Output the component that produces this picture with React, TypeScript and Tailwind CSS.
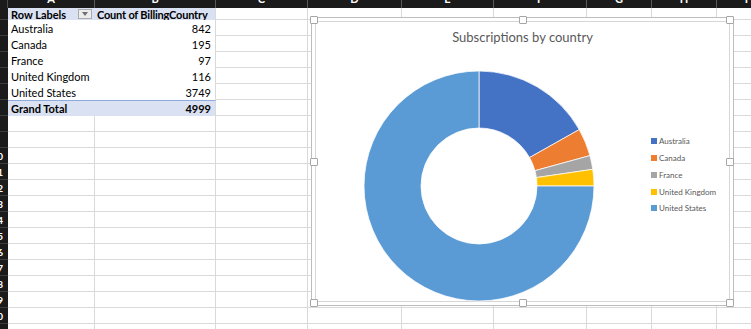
import clsx from 'clsx';

const COLS = [
  { w: 'w-[87px]', letter: 'A' },
  { w: 'w-[121px]', letter: 'B' },
  { w: 'w-[92px]', letter: 'C' },
  { w: 'w-[94px]', letter: 'D' },
  { w: 'w-[92px]', letter: 'E' },
  { w: 'w-[93px]', letter: 'F' },
  { w: 'w-[65px]', letter: 'G' },
  { w: 'w-[65px]', letter: 'H' },
  { w: 'w-[60px]', letter: 'I' },
];

const DATA = [
  { label: 'Australia', count: 842, color: '#4472C4' },
  { label: 'Canada', count: 195, color: '#ED7D31' },
  { label: 'France', count: 97, color: '#A5A5A5' },
  { label: 'United Kingdom', count: 116, color: '#FFC000' },
  { label: 'United States', count: 3749, color: '#5B9BD5' },
];

const TOTAL = DATA.reduce((sum, d) => sum + d.count, 0);

// angles measured clockwise from 12 o'clock
const point = (c: number, rad: number, deg: number) => {
  const a = (deg * Math.PI) / 180;
  return [c + rad * Math.sin(a), c - rad * Math.cos(a)];
};

const slicePath = (c: number, R: number, r: number, a0: number, a1: number) => {
  const large = a1 - a0 > 180 ? 1 : 0;
  const [x0, y0] = point(c, R, a0);
  const [x1, y1] = point(c, R, a1);
  const [x2, y2] = point(c, r, a1);
  const [x3, y3] = point(c, r, a0);
  return `M ${x0} ${y0} A ${R} ${R} 0 ${large} 1 ${x1} ${y1} L ${x2} ${y2} A ${r} ${r} 0 ${large} 0 ${x3} ${y3} Z`;
};

const Donut = () => {
  let start = 0;
  return (
    <svg width="232" height="232" viewBox="0 0 232 232" className="shrink-0">
      {DATA.map((d) => {
        const sweep = (d.count / TOTAL) * 360;
        const path = slicePath(116, 115, 58, start, start + sweep);
        start += sweep;
        return <path key={d.label} d={path} fill={d.color} stroke="#ffffff" strokeWidth="0.75" />;
      })}
    </svg>
  );
};

const Handle = ({ className }: { className: string }) => (
  <div className={clsx('absolute h-[8px] w-[8px] rounded-[1px] border border-[#a6a6a6] bg-white', className)} />
);

const Chart = () => (
  <div className="absolute left-[311px] top-[17px] h-[289px] w-[423px] border border-[#bdbdbd] bg-white p-[3px]">
    <div className="flex h-full w-full flex-col border border-[#d6d6d6]">
      <div className="mt-[7px] h-[16px] text-center text-[13px] leading-[16px] text-[#595959]">Subscriptions by country</div>
      <div className="mt-[25px] flex items-start">
        <div className="ml-[47px]">
          <Donut />
        </div>
        <div className="ml-[56px] mt-[63px] flex flex-col">
          {DATA.map((d) => (
            <div key={d.label} className="flex h-[16.75px] items-center gap-[2px] text-[8px] text-[#595959]">
              <span className="h-[6px] w-[6px]" style={{ backgroundColor: d.color }} />
              <span>{d.label}</span>
            </div>
          ))}
        </div>
      </div>
    </div>
    <Handle className="left-[-2px] top-[-2px]" />
    <Handle className="left-1/2 top-[-2px] -translate-x-1/2" />
    <Handle className="right-[-1px] top-[-2px]" />
    <Handle className="left-[-2px] top-1/2 -translate-y-1/2" />
    <Handle className="right-[-1px] top-1/2 -translate-y-1/2" />
    <Handle className="bottom-[-2px] left-[-2px]" />
    <Handle className="bottom-[-2px] left-1/2 -translate-x-1/2" />
    <Handle className="bottom-[-2px] right-[-1px]" />
  </div>
);

const RowHead = ({ n }: { n: number }) => (
  <div className="flex w-[8px] shrink-0 items-center justify-end overflow-hidden border-b border-[#3c3c3c] bg-[#1b1b1b] pr-[5px]">
    {n >= 10 && <span className="text-[10px] font-bold leading-none text-white">{n}</span>}
  </div>
);

const PivotCells = ({ n }: { n: number }) => {
  if (n === 1) {
    return (
      <>
        <div className="flex w-[87px] shrink-0 items-center bg-[#D9E1F2] pl-[3px] font-bold">
          Row Labels
          <span className="ml-auto mr-[3px] flex h-[10px] w-[14px] items-center justify-center border border-[#ababab] bg-[#ececec]">
            <span className="h-0 w-0 border-x-[3.5px] border-t-[4px] border-x-transparent border-t-[#6f6f6f]" />
          </span>
        </div>
        <div className="flex w-[121px] shrink-0 items-center border-r border-[#d9d9d9] bg-[#D9E1F2] pl-[2px] font-bold tracking-[-0.2px]">
          Count of BillingCountry
        </div>
      </>
    );
  }
  if (n === 7) {
    return (
      <>
        <div className="flex w-[87px] shrink-0 items-center border-t border-[#8EA9DB] bg-[#D9E1F2] pl-[3px] font-bold">
          Grand Total
        </div>
        <div className="flex w-[121px] shrink-0 items-center justify-end border-r border-t border-[#d9d9d9] border-t-[#8EA9DB] bg-[#D9E1F2] pr-[4px] font-bold">
          {TOTAL}
        </div>
      </>
    );
  }
  const d = DATA[n - 2];
  return (
    <>
      <div className="flex w-[87px] shrink-0 items-center bg-white pl-[3px]">{d.label}</div>
      <div className="flex w-[121px] shrink-0 items-center justify-end border-r border-[#d9d9d9] bg-white pr-[4px]">
        {d.count}
      </div>
    </>
  );
};

const App = () => {
  const rows = Array.from({ length: 21 }, (_, i) => i + 1);

  return (
    <div className="relative h-[329px] w-[751px] overflow-hidden bg-white font-['Lato',sans-serif] text-[11px] text-black">
      <div className="flex h-[8px] overflow-hidden bg-[#1b1b1b]">
        <div className="w-[8px] shrink-0 border-r border-[#4a4a4a]" />
        {COLS.map((c) => (
          <div key={c.letter} className={clsx(c.w, 'flex shrink-0 justify-center border-r border-[#5a5a5a]')}>
            <span className="-mt-[7px] text-[11px] font-bold leading-[11px] text-white">{c.letter}</span>
          </div>
        ))}
      </div>

      {rows.map((n) => (
        <div key={n} className={clsx('flex leading-none', n === 1 ? 'h-[12px]' : 'h-[16px]')}>
          <RowHead n={n} />
          {n <= 7 ? (
            <PivotCells n={n} />
          ) : (
            <>
              <div className="w-[87px] shrink-0 border-b border-r border-[#d9d9d9]" />
              <div className="w-[121px] shrink-0 border-b border-r border-[#d9d9d9]" />
            </>
          )}
          {COLS.slice(2).map((c) => (
            <div key={c.letter} className={clsx(c.w, 'shrink-0 border-b border-r border-[#d9d9d9]')} />
          ))}
        </div>
      ))}

      <Chart />
    </div>
  );
};

export default App;
